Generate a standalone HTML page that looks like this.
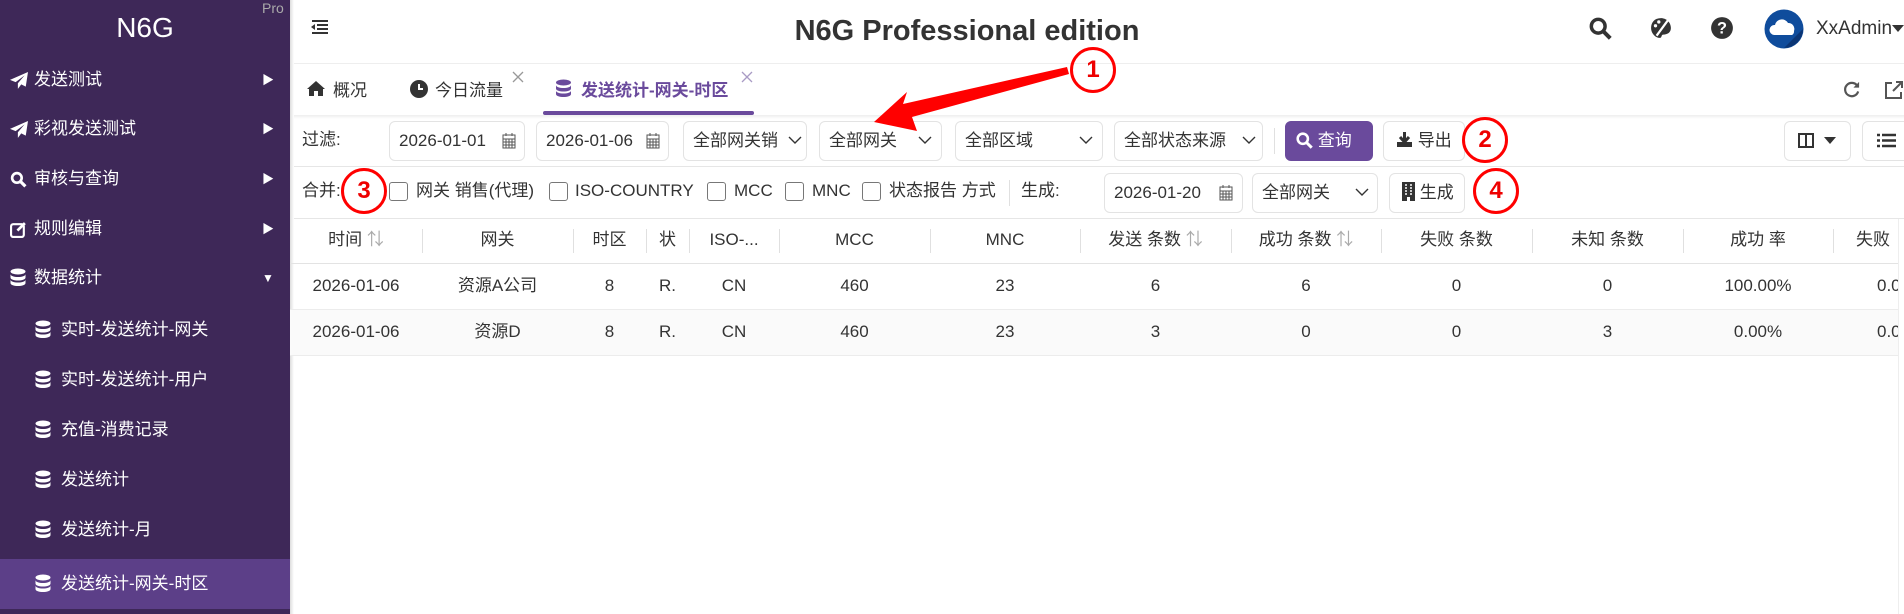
<!DOCTYPE html>
<html><head><meta charset="utf-8"><style>
*{box-sizing:border-box;margin:0;padding:0}
body{width:1904px;height:614px;overflow:hidden;background:#fff;font-family:"Liberation Sans","Noto Sans CJK SC",sans-serif;color:#333;font-size:17px;position:relative}
.a{position:absolute;white-space:nowrap;line-height:22px}
#sb{position:absolute;left:0;top:0;width:290px;height:614px;background:#3e2858}
.mi{position:absolute;left:0;width:290px;height:50px;color:#fff;font-size:17px;line-height:50px}
.mi .a{line-height:50px}
.box{position:absolute;border:1px solid #e3e3e3;border-radius:6px;background:#fff;height:40px;line-height:38px;padding-left:9px;font-size:17px;color:#333;white-space:nowrap}
.box .a{line-height:38px}
.cb{position:absolute;width:19px;height:19px;border:1px solid #777;border-radius:3px;top:182px}
.th,.td{position:absolute;text-align:center;font-size:17px;line-height:22px;white-space:nowrap}
.circ{position:absolute;width:46px;height:46px;border:3.5px solid #f00;border-radius:50%;color:#e00;font-weight:bold;font-size:24px;text-align:center;line-height:39px;background:transparent}
.sep{position:absolute;width:1px;background:#e0e0e0}
.chev{position:absolute;top:13px}
</style></head><body>
<div id="sb">
 <div class="a" style="left:0;width:290px;text-align:center;top:12px;font-size:28px;line-height:32px;color:#fff">N6G</div>
 <div class="a" style="left:262px;top:0px;font-size:14px;line-height:16px;color:#aaa">Pro</div>
 <div class="mi" style="top:55px"><svg class="a" style="left:10px;top:17px" width="18" height="18" viewBox="0 0 16 16"><path d="M16 0L0 7l5 2 8-6-6 7v5l3-4 4 2z" fill="#fff"/></svg><span class="a" style="left:34px">发送测试</span><span class="a" style="left:262px;font-size:12px">▶</span></div>
 <div class="mi" style="top:104px"><svg class="a" style="left:10px;top:17px" width="18" height="18" viewBox="0 0 16 16"><path d="M16 0L0 7l5 2 8-6-6 7v5l3-4 4 2z" fill="#fff"/></svg><span class="a" style="left:34px">彩视发送测试</span><span class="a" style="left:262px;font-size:12px">▶</span></div>
 <div class="mi" style="top:154px"><svg class="a" style="left:10px;top:17px" width="17" height="17" viewBox="0 0 16 16"><circle cx="6.5" cy="6.5" r="4.5" stroke="#fff" stroke-width="2.5" fill="none"/><path d="M10 10l4.5 4.5" stroke="#fff" stroke-width="3"/></svg><span class="a" style="left:34px">审核与查询</span><span class="a" style="left:262px;font-size:12px">▶</span></div>
 <div class="mi" style="top:204px"><svg class="a" style="left:10px;top:17px" width="17" height="17" viewBox="0 0 16 16"><rect x="1" y="3" width="12" height="12" rx="2" stroke="#fff" stroke-width="2" fill="none"/><path d="M7 9l7-7" stroke="#fff" stroke-width="2.5"/></svg><span class="a" style="left:34px">规则编辑</span><span class="a" style="left:262px;font-size:12px">▶</span></div>
 <div class="mi" style="top:253px"><svg class="a" style="left:10px;top:15px" width="16" height="20" viewBox="0 0 16 20"><ellipse cx="8" cy="3.5" rx="7.5" ry="3" fill="#fff"/><path d="M.5 6c0 4 15 4 15 0v3.5c0 4-15 4-15 0zM.5 11.5c0 4 15 4 15 0V15c0 4-15 4-15 0z" fill="#fff"/></svg><span class="a" style="left:34px">数据统计</span><span class="a" style="left:262px;font-size:12px">▼</span></div>
 <div class="mi" style="top:305px"><svg class="a" style="left:35px;top:15px" width="16" height="20" viewBox="0 0 16 20"><ellipse cx="8" cy="3.5" rx="7.5" ry="3" fill="#fff"/><path d="M.5 6c0 4 15 4 15 0v3.5c0 4-15 4-15 0zM.5 11.5c0 4 15 4 15 0V15c0 4-15 4-15 0z" fill="#fff"/></svg><span class="a" style="left:61px">实时-发送统计-网关</span></div>
 <div class="mi" style="top:355px"><svg class="a" style="left:35px;top:15px" width="16" height="20" viewBox="0 0 16 20"><ellipse cx="8" cy="3.5" rx="7.5" ry="3" fill="#fff"/><path d="M.5 6c0 4 15 4 15 0v3.5c0 4-15 4-15 0zM.5 11.5c0 4 15 4 15 0V15c0 4-15 4-15 0z" fill="#fff"/></svg><span class="a" style="left:61px">实时-发送统计-用户</span></div>
 <div class="mi" style="top:405px"><svg class="a" style="left:35px;top:15px" width="16" height="20" viewBox="0 0 16 20"><ellipse cx="8" cy="3.5" rx="7.5" ry="3" fill="#fff"/><path d="M.5 6c0 4 15 4 15 0v3.5c0 4-15 4-15 0zM.5 11.5c0 4 15 4 15 0V15c0 4-15 4-15 0z" fill="#fff"/></svg><span class="a" style="left:61px">充值-消费记录</span></div>
 <div class="mi" style="top:455px"><svg class="a" style="left:35px;top:15px" width="16" height="20" viewBox="0 0 16 20"><ellipse cx="8" cy="3.5" rx="7.5" ry="3" fill="#fff"/><path d="M.5 6c0 4 15 4 15 0v3.5c0 4-15 4-15 0zM.5 11.5c0 4 15 4 15 0V15c0 4-15 4-15 0z" fill="#fff"/></svg><span class="a" style="left:61px">发送统计</span></div>
 <div class="mi" style="top:505px"><svg class="a" style="left:35px;top:15px" width="16" height="20" viewBox="0 0 16 20"><ellipse cx="8" cy="3.5" rx="7.5" ry="3" fill="#fff"/><path d="M.5 6c0 4 15 4 15 0v3.5c0 4-15 4-15 0zM.5 11.5c0 4 15 4 15 0V15c0 4-15 4-15 0z" fill="#fff"/></svg><span class="a" style="left:61px">发送统计-月</span></div>
 <div class="mi" style="top:559px;height:50px;background:#5c3f88"><svg class="a" style="left:35px;top:15px" width="16" height="20" viewBox="0 0 16 20"><ellipse cx="8" cy="3.5" rx="7.5" ry="3" fill="#fff"/><path d="M.5 6c0 4 15 4 15 0v3.5c0 4-15 4-15 0zM.5 11.5c0 4 15 4 15 0V15c0 4-15 4-15 0z" fill="#fff"/></svg><span class="a" style="left:61px">发送统计-网关-时区</span></div>
</div>
<div class="a" style="left:290px;top:0;width:4px;height:614px;background:linear-gradient(90deg,#ddd,#fff)"></div>
<!-- header -->
<svg class="a" style="left:311px;top:19px" width="18" height="16" viewBox="0 0 18 16"><path d="M1 2h16M6 6h11M6 10h11M1 14h16" stroke="#333" stroke-width="2"/><path d="M4 5v6L0 8z" fill="#333"/></svg>
<div class="a" style="left:0;width:1934px;text-align:center;top:13px;font-size:29px;line-height:36px;font-weight:bold;color:#333">N6G Professional edition</div>
<svg class="a" style="left:1589px;top:17px" width="23" height="23" viewBox="0 0 20 20"><circle cx="8" cy="8" r="6" stroke="#333" stroke-width="3" fill="none"/><path d="M12.5 12.5l6 6" stroke="#333" stroke-width="3.5"/></svg>
<svg class="a" style="left:1650px;top:17px" width="22" height="22" viewBox="0 0 20 20"><path d="M10 1C4 1 1 5 1 10c0 5 4 9 8 9 2 0 1-3 3-3 4 0 7-2 7-6 0-5-4-9-9-9z" fill="#333"/><path d="M17 2L6 17" stroke="#fff" stroke-width="2"/><circle cx="5" cy="8" r="1.5" fill="#fff"/><circle cx="8" cy="4.5" r="1.5" fill="#fff"/></svg>
<svg class="a" style="left:1710px;top:16px" width="24" height="24" viewBox="0 0 22 22"><circle cx="11" cy="11" r="10" fill="#333"/><text x="11" y="16" text-anchor="middle" fill="#fff" font-size="15" font-weight="bold" font-family="Liberation Sans">?</text></svg>
<svg class="a" style="left:1764px;top:9px" width="40" height="40" viewBox="0 0 40 40"><circle cx="20" cy="20" r="19.5" fill="#0f4c9c"/><path d="M20 39L39 20A19 19 0 0 1 20 39z" fill="#0b3574"/><path d="M10 26a5 5 0 0 1 1-10 7 7 0 0 1 13-2 6 6 0 0 1 6 8 4 4 0 0 1-2 4z" fill="#fff"/></svg>
<div class="a" style="left:1816px;top:18px;font-size:19px">XxAdmin</div>
<svg class="a" style="left:1892px;top:25px" width="12" height="8" viewBox="0 0 12 8"><path d="M0 0h12L6 7z" fill="#333"/></svg>
<div class="a" style="left:294px;top:63px;width:1610px;height:1px;background:#eee"></div>
<!-- tabs -->
<svg class="a" style="left:307px;top:81px" width="18" height="15" viewBox="0 0 18 15"><path d="M9 0L0 8h2v7h5v-5h4v5h5V8h2z" fill="#333"/></svg>
<div class="a" style="left:333px;top:80px">概况</div>
<svg class="a" style="left:410px;top:80px" width="18" height="18" viewBox="0 0 18 18"><circle cx="9" cy="9" r="9" fill="#333"/><path d="M9 4v5h4" stroke="#fff" stroke-width="2" fill="none"/></svg>
<div class="a" style="left:435px;top:80px">今日流量</div>
<svg class="a" style="left:512px;top:71px" width="12" height="12" viewBox="0 0 12 12"><path d="M1 1l10 10M11 1L1 11" stroke="#999" stroke-width="1.3"/></svg>
<svg class="a" style="left:555px;top:79px" width="17" height="20" viewBox="0 0 16 20"><ellipse cx="8" cy="3.5" rx="7.5" ry="3" fill="#6a4a9c"/><path d="M.5 6c0 4 15 4 15 0v3.5c0 4-15 4-15 0zM.5 11.5c0 4 15 4 15 0V15c0 4-15 4-15 0z" fill="#6a4a9c"/></svg>
<div class="a" style="left:581px;top:80px;font-weight:bold;color:#6a4a9c">发送统计-网关-时区</div>
<svg class="a" style="left:741px;top:71px" width="12" height="12" viewBox="0 0 12 12"><path d="M1 1l10 10M11 1L1 11" stroke="#a99bc5" stroke-width="1.3"/></svg>
<div class="a" style="left:543px;top:111px;width:211px;height:4px;border-radius:2px;background:#6a4a9c"></div>
<svg class="a" style="left:1842px;top:80px" width="19" height="19" viewBox="0 0 20 20"><path d="M16 6A7 7 0 1 0 17 12" stroke="#555" stroke-width="2.3" fill="none"/><path d="M18 2v6h-6z" fill="#555"/></svg>
<svg class="a" style="left:1884px;top:80px" width="20" height="20" viewBox="0 0 20 20"><path d="M8 3H2v15h15v-6" stroke="#555" stroke-width="2" fill="none"/><path d="M9 11l9-9M12 2h6v6" stroke="#555" stroke-width="2" fill="none"/></svg>
<div class="a" style="left:294px;top:115px;width:1610px;height:4px;background:linear-gradient(#eee,#fff)"></div>
<!-- filter row -->
<div class="a" style="left:302px;top:129px">过滤:</div>
<div class="box" style="left:389px;top:121px;width:136px">2026-01-01<svg class="chev" style="left:112px;top:11px" width="14" height="16" viewBox="0 0 14 16"><rect x="1" y="2" width="12" height="13" stroke="#555" fill="none"/><path d="M1 6h12M4 6v9M7 6v9M10 6v9M1 9h12M1 12h12M4 0v3M10 0v3" stroke="#555"/></svg></div>
<div class="box" style="left:536px;top:121px;width:133px">2026-01-06<svg class="chev" style="left:109px;top:11px" width="14" height="16" viewBox="0 0 14 16"><rect x="1" y="2" width="12" height="13" stroke="#555" fill="none"/><path d="M1 6h12M4 6v9M7 6v9M10 6v9M1 9h12M1 12h12M4 0v3M10 0v3" stroke="#555"/></svg></div>
<div class="box" style="left:683px;top:121px;width:124px">全部网关销<svg class="chev" style="left:104px" width="14" height="10" viewBox="0 0 14 10"><path d="M1 2l6 6 6-6" stroke="#333" stroke-width="1.4" fill="none"/></svg></div>
<div class="box" style="left:819px;top:121px;width:123px">全部网关<svg class="chev" style="left:98px" width="14" height="10" viewBox="0 0 14 10"><path d="M1 2l6 6 6-6" stroke="#333" stroke-width="1.4" fill="none"/></svg></div>
<div class="box" style="left:955px;top:121px;width:148px">全部区域<svg class="chev" style="left:123px" width="14" height="10" viewBox="0 0 14 10"><path d="M1 2l6 6 6-6" stroke="#333" stroke-width="1.4" fill="none"/></svg></div>
<div class="box" style="left:1114px;top:121px;width:149px">全部状态来源<svg class="chev" style="left:127px" width="14" height="10" viewBox="0 0 14 10"><path d="M1 2l6 6 6-6" stroke="#333" stroke-width="1.4" fill="none"/></svg></div>
<div class="sep" style="left:1274px;top:128px;height:26px"></div>
<div class="box" style="left:1285px;top:121px;width:88px;background:#6a4a9c;border-color:#6a4a9c;color:#fff;padding-left:10px"><svg style="vertical-align:-3px" width="17" height="17" viewBox="0 0 20 20"><circle cx="8" cy="8" r="6" stroke="#fff" stroke-width="3" fill="none"/><path d="M12.5 12.5l6 6" stroke="#fff" stroke-width="3.5"/></svg> 查询</div>
<div class="box" style="left:1383px;top:121px;width:82px;padding-left:12px"><svg style="vertical-align:-2px" width="17" height="17" viewBox="0 0 17 17"><path d="M8.5 1v9M4 6l4.5 5 4.5-5" stroke="#333" stroke-width="3" fill="none"/><path d="M1 11h15v5H1z" fill="#333"/></svg> 导出</div>
<div class="box" style="left:1784px;top:121px;width:67px;padding-left:13px"><svg style="vertical-align:-2px" width="16" height="15" viewBox="0 0 16 15"><rect x="1" y="1" width="14" height="13" stroke="#333" stroke-width="2" fill="none"/><path d="M8 1v13" stroke="#333" stroke-width="2"/></svg><svg style="margin-left:10px;vertical-align:1px" width="12" height="8" viewBox="0 0 12 8"><path d="M0 0h12L6 7z" fill="#333"/></svg></div>
<div class="box" style="left:1862px;top:121px;width:50px;padding-left:14px"><svg style="vertical-align:-2px" width="19" height="15" viewBox="0 0 19 15"><path d="M0 2h3M5 2h14M0 7.5h3M5 7.5h14M0 13h3M5 13h14" stroke="#333" stroke-width="2.5"/></svg></div>
<div class="a" style="left:294px;top:166px;width:1610px;height:1px;background:#e6e6e6"></div>
<!-- row 2 -->
<div class="a" style="left:302px;top:180px">合并:</div>
<div class="cb" style="left:389px"></div><div class="a" style="left:416px;top:180px">网关 销售(代理)</div>
<div class="cb" style="left:549px"></div><div class="a" style="left:575px;top:180px">ISO-COUNTRY</div>
<div class="cb" style="left:707px"></div><div class="a" style="left:734px;top:180px">MCC</div>
<div class="cb" style="left:785px"></div><div class="a" style="left:812px;top:180px">MNC</div>
<div class="cb" style="left:862px"></div><div class="a" style="left:889px;top:180px">状态报告 方式</div>
<div class="sep" style="left:1009px;top:180px;height:26px"></div>
<div class="a" style="left:1021px;top:180px">生成:</div>
<div class="box" style="left:1104px;top:173px;width:139px">2026-01-20<svg class="chev" style="left:114px;top:11px" width="14" height="16" viewBox="0 0 14 16"><rect x="1" y="2" width="12" height="13" stroke="#555" fill="none"/><path d="M1 6h12M4 6v9M7 6v9M10 6v9M1 9h12M1 12h12M4 0v3M10 0v3" stroke="#555"/></svg></div>
<div class="box" style="left:1252px;top:173px;width:126px">全部网关<svg class="chev" style="left:102px" width="14" height="10" viewBox="0 0 14 10"><path d="M1 2l6 6 6-6" stroke="#333" stroke-width="1.4" fill="none"/></svg></div>
<div class="box" style="left:1389px;top:173px;width:76px;padding-left:12px"><svg style="vertical-align:-3px" width="13" height="19" viewBox="0 0 13 19"><rect width="13" height="19" fill="#333"/><path d="M3 3h2M8 3h2M3 6h2M8 6h2M3 9h2M8 9h2M3 12h2M8 12h2" stroke="#fff" stroke-width="1.5"/><rect x="5" y="15" width="3" height="4" fill="#fff"/></svg> 生成</div>
<div class="a" style="left:294px;top:218px;width:1610px;height:1px;background:#e6e6e6"></div>
<!-- table -->
<div class="a" style="left:290px;top:263px;width:1610px;height:1px;background:#e3e3e3"></div>
<div class="a" style="left:290px;top:309px;width:1610px;height:46px;background:#fafafa"></div>
<div class="a" style="left:290px;top:309px;width:1610px;height:1px;background:#ececec"></div>
<div class="a" style="left:290px;top:355px;width:1610px;height:1px;background:#ececec"></div>
<div class="sep" style="left:422px;top:229px;height:24px"></div><div class="sep" style="left:573px;top:229px;height:24px"></div><div class="sep" style="left:646px;top:229px;height:24px"></div><div class="sep" style="left:689px;top:229px;height:24px"></div><div class="sep" style="left:779px;top:229px;height:24px"></div><div class="sep" style="left:930px;top:229px;height:24px"></div><div class="sep" style="left:1080px;top:229px;height:24px"></div><div class="sep" style="left:1231px;top:229px;height:24px"></div><div class="sep" style="left:1381px;top:229px;height:24px"></div><div class="sep" style="left:1532px;top:229px;height:24px"></div><div class="sep" style="left:1683px;top:229px;height:24px"></div><div class="sep" style="left:1833px;top:229px;height:24px"></div>
<div class="th" style="left:290px;width:132px;top:229px">时间 <span style="color:#aaa">⇅</span></div>
<div class="th" style="left:422px;width:151px;top:229px">网关</div>
<div class="th" style="left:573px;width:73px;top:229px">时区</div>
<div class="th" style="left:646px;width:43px;top:229px">状</div>
<div class="th" style="left:689px;width:90px;top:229px">ISO-...</div>
<div class="th" style="left:779px;width:151px;top:229px">MCC</div>
<div class="th" style="left:930px;width:150px;top:229px">MNC</div>
<div class="th" style="left:1080px;width:151px;top:229px">发送 条数 <span style="color:#aaa">⇅</span></div>
<div class="th" style="left:1231px;width:150px;top:229px">成功 条数 <span style="color:#aaa">⇅</span></div>
<div class="th" style="left:1381px;width:151px;top:229px">失败 条数</div>
<div class="th" style="left:1532px;width:151px;top:229px">未知 条数</div>
<div class="th" style="left:1683px;width:150px;top:229px">成功 率</div>
<div class="th" style="left:1856px;top:229px">失败</div>
<div class="td" style="left:290px;width:132px;top:275px">2026-01-06</div><div class="td" style="left:422px;width:151px;top:275px">资源A公司</div><div class="td" style="left:573px;width:73px;top:275px">8</div><div class="td" style="left:646px;width:43px;top:275px">R.</div><div class="td" style="left:689px;width:90px;top:275px">CN</div><div class="td" style="left:779px;width:151px;top:275px">460</div><div class="td" style="left:930px;width:150px;top:275px">23</div><div class="td" style="left:1080px;width:151px;top:275px">6</div><div class="td" style="left:1231px;width:150px;top:275px">6</div><div class="td" style="left:1381px;width:151px;top:275px">0</div><div class="td" style="left:1532px;width:151px;top:275px">0</div><div class="td" style="left:1683px;width:150px;top:275px">100.00%</div><div class="td" style="left:1877px;top:275px">0.0</div>
<div class="td" style="left:290px;width:132px;top:321px">2026-01-06</div><div class="td" style="left:422px;width:151px;top:321px">资源D</div><div class="td" style="left:573px;width:73px;top:321px">8</div><div class="td" style="left:646px;width:43px;top:321px">R.</div><div class="td" style="left:689px;width:90px;top:321px">CN</div><div class="td" style="left:779px;width:151px;top:321px">460</div><div class="td" style="left:930px;width:150px;top:321px">23</div><div class="td" style="left:1080px;width:151px;top:321px">3</div><div class="td" style="left:1231px;width:150px;top:321px">0</div><div class="td" style="left:1381px;width:151px;top:321px">0</div><div class="td" style="left:1532px;width:151px;top:321px">3</div><div class="td" style="left:1683px;width:150px;top:321px">0.00%</div><div class="td" style="left:1877px;top:321px">0.0</div>
<div class="a" style="left:1898px;top:219px;width:6px;height:395px;background:#fff;border-left:1px solid #eee"></div>
<!-- annotations -->
<svg class="a" style="left:0;top:0" width="1904" height="614"><polygon points="1067,67 1069,74 912,117 917,131 874,122 907,92 903,104" fill="#f00"/></svg>
<div class="circ" style="left:1070px;top:47px">1</div>
<div class="circ" style="left:1462px;top:117px">2</div>
<div class="circ" style="left:341px;top:168px">3</div>
<div class="circ" style="left:1473px;top:168px">4</div>
</body></html>
